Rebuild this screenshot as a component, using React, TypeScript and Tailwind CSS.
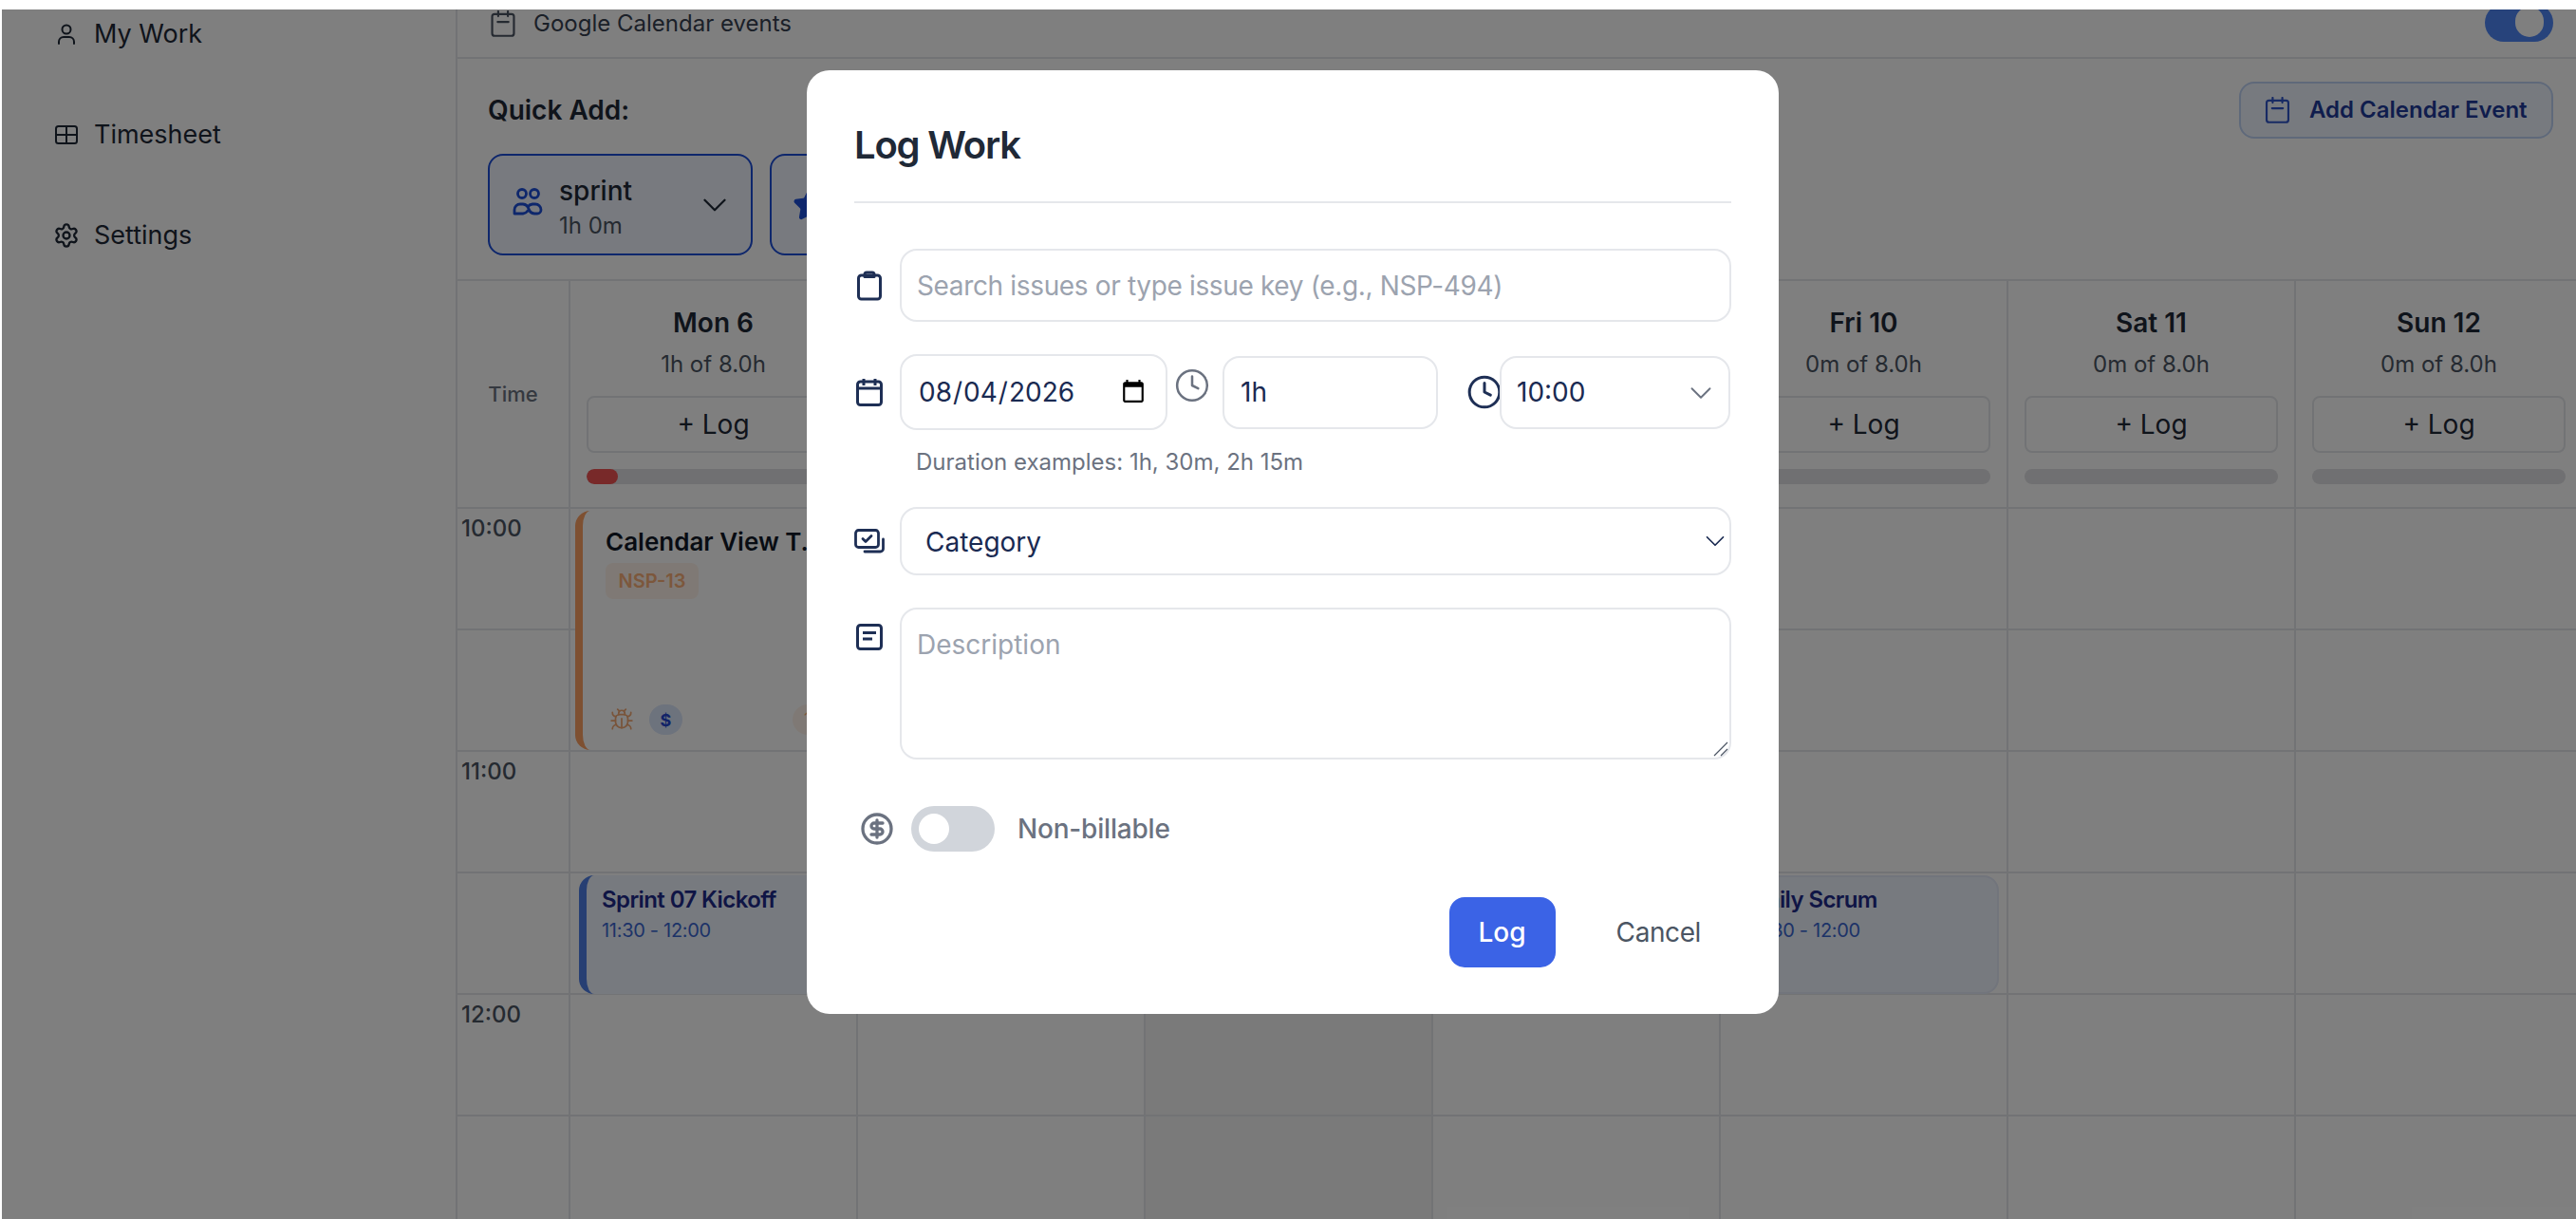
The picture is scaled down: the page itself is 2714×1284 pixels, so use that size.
import { Bug, ChevronDown, CircleDollarSign, Clock, Settings, Star } from 'lucide-react';

const days = [
  { name: 'Mon 6', logged: '1h of 8.0h', progress: true },
  { name: 'Tue 7', logged: '0m of 8.0h' },
  { name: 'Wed 8', logged: '0m of 8.0h', today: true },
  { name: 'Thu 9', logged: '0m of 8.0h' },
  { name: 'Fri 10', logged: '0m of 8.0h' },
  { name: 'Sat 11', logged: '0m of 8.0h' },
  { name: 'Sun 12', logged: '0m of 8.0h' },
];

const CalendarIcon = ({ className }: { className?: string }) => (
  <svg viewBox="2 1 20 22" fill="none" stroke="currentColor" strokeWidth="1.7" strokeLinecap="round" strokeLinejoin="round" className={className}>
    <rect x="3" y="4" width="18" height="18" rx="2" />
    <path d="M8 1.8v4M16 1.8v4M7.5 10.5h9" />
  </svg>
);

const PersonIcon = () => (
  <svg viewBox="0 0 24 24" fill="none" stroke="currentColor" strokeWidth="2" strokeLinecap="round" className="w-6 h-6 shrink-0">
    <circle cx="12" cy="7" r="4.5" />
    <path d="M4 22v-2a5 5 0 0 1 5-5h6a5 5 0 0 1 5 5v2" />
  </svg>
);

const TableIcon = () => (
  <svg viewBox="0 0 24 24" fill="none" stroke="currentColor" strokeWidth="2" strokeLinejoin="round" className="w-6 h-6 shrink-0">
    <rect x="1" y="3" width="22" height="18" rx="2.5" />
    <path d="M1 12h22M12 3v18" />
  </svg>
);

const TeamIcon = () => (
  <svg viewBox="0 0 32 32" fill="none" stroke="currentColor" strokeWidth="2.8" strokeLinecap="round" className="w-8 h-8 shrink-0 -mt-[8px]">
    <circle cx="10" cy="8" r="4.5" />
    <circle cx="23" cy="8" r="4.5" />
    <path d="M2 29v-4a6 6 0 0 1 6-6h3a7 7 0 0 1 6 5 7 7 0 0 0 6 5h3a4 4 0 0 0 4-4 6 6 0 0 0-6-6h-3a7 7 0 0 0-5 3M2 29h9a7 7 0 0 0 5-3" />
  </svg>
);

const ClipboardIcon = () => (
  <svg viewBox="0 0 28 32" fill="none" stroke="currentColor" strokeWidth="3" strokeLinejoin="round" className="w-[28px] h-[32px] shrink-0">
    <rect x="2.5" y="5" width="23" height="25" rx="3" />
    <path d="M9 6.5V4a2 2 0 0 1 2-2h6a2 2 0 0 1 2 2v2.5z" />
  </svg>
);

const CalendarBoldIcon = () => (
  <svg viewBox="0 0 28 30" fill="none" stroke="currentColor" strokeWidth="3" strokeLinejoin="round" className="w-[28px] h-[30px] shrink-0">
    <rect x="1.5" y="4" width="25" height="24.5" rx="3" />
    <path d="M8 1v7M20 1v7M1.5 11h25" />
  </svg>
);

const CategoryIcon = () => (
  <svg viewBox="0 0 32 26" fill="none" stroke="currentColor" strokeWidth="2.8" strokeLinecap="round" strokeLinejoin="round" className="w-[32px] h-[26px] shrink-0">
    <rect x="1.5" y="1.5" width="24" height="18" rx="3" />
    <path d="M9 10.5l3 3 6-6" />
    <path d="M30.5 11v10a3 3 0 0 1-3 3H11" />
  </svg>
);

const NoteIcon = () => (
  <svg viewBox="0 0 28 28" fill="none" stroke="currentColor" strokeWidth="3" strokeLinejoin="round" className="w-[28px] h-[28px] shrink-0">
    <rect x="1.5" y="1.5" width="25" height="25" rx="3" />
    <path d="M7 9.5h14M7 16h10" />
  </svg>
);

const DayColumn = ({ day, index }: { day: (typeof days)[number]; index: number }) => (
  <div className="relative w-[303px] shrink-0 border-r-2 border-[#e5e7eb]">
    <div className="h-[240px] border-b-2 border-[#e5e7eb] px-[17px] pt-[26px] flex flex-col">
      <div className="h-[36px] leading-[36px] text-center text-[28px] font-semibold text-[#1f2937]">{day.name}</div>
      <div className="mt-[8px] h-[36px] leading-[36px] text-center text-[24px] text-[#4b5563]">{day.logged}</div>
      <button className="mt-[15px] h-[60px] w-full border-2 border-[#e5e7eb] rounded-[8px] text-[28px] text-[#1f2937]">+ Log</button>
      <div className="mt-[17px] h-[16px] rounded-full bg-[#e0e0e4] overflow-hidden">
        {day.progress && <div className="h-full w-[33px] rounded-full bg-[#f05252]" />}
      </div>
    </div>
    {[0, 1, 2, 3, 4, 5].map((r) => (
      <div key={r} className={`h-[128px] border-b-2 border-[#e5e7eb] ${day.today ? 'bg-[#f4f4f4]' : ''}`} />
    ))}
    {index === 0 && (
      <>
        <div className="absolute left-[5px] top-[242px] w-[296px] h-[252px] rounded-[16px] border-l-[8px] border-[#fca063] bg-white pl-[24px] pt-[17px]">
          <div className="text-[26px] leading-[32px] font-semibold text-[#111827] whitespace-nowrap">Calendar View T...</div>
          <div className="mt-[6px] w-[98px] h-[38px] text-center rounded-[8px] bg-[#fff3ea] text-[20px] leading-[38px] font-semibold text-[#f8ae78]">NSP-13</div>
          <div className="absolute left-[28px] bottom-[16px] flex items-center gap-[16px]">
            <Bug className="w-[26px] h-[26px] text-[#f2a874]" strokeWidth={1.6} />
            <div className="w-[35px] h-[32px] rounded-full bg-[#dbe6fb] flex items-center justify-center text-[18px] font-bold text-[#2547d0]">$</div>
          </div>
          <div className="absolute right-[7px] bottom-[16px] w-[60px] h-[32px] rounded-full bg-[#fff3ea] text-[18px] leading-[32px] pl-[12px] text-[#f8ae78]">1h</div>
        </div>
        <div className="absolute left-[9px] top-[626px] w-[288px] h-[125px] rounded-[16px] border-l-[8px] border-[#4f7fe6] bg-[#eff4ff] pl-[16px] pt-[10px]">
          <div className="text-[24px] leading-[32px] font-semibold tracking-[-0.6px] text-[#1e2a8a] whitespace-nowrap">Sprint 07 Kickoff</div>
          <div className="text-[20px] leading-[28px] mt-[2px] tracking-[-0.3px] text-[#3b66d0] whitespace-nowrap">11:30 - 12:00</div>
        </div>
      </>
    )}
    {index === 4 && (
      <div className="absolute left-[9px] top-[626px] w-[284px] h-[125px] rounded-[16px] border-2 border-[#e4eaf8] bg-[#eff4ff] pl-[21px] pt-[8px]">
        <div className="text-[24px] leading-[32px] font-semibold tracking-[-0.6px] text-[#1e2a8a] whitespace-nowrap">Daily Scrum</div>
        <div className="text-[20px] leading-[28px] mt-[2px] tracking-[-0.3px] text-[#3b66d0] whitespace-nowrap">11:30 - 12:00</div>
      </div>
    )}
  </div>
);

const App = () => {
  return (
    <div className="w-[2714px] h-[1284px] bg-white pt-[10px] pl-[2px] overflow-hidden font-['Inter',sans-serif]">
      <div className="relative w-[2712px] h-[1274px] overflow-hidden flex bg-white">
        {/* sidebar */}
        <aside className="w-[480px] shrink-0 border-r-2 border-[#e5e7eb] pl-[56px] flex flex-col gap-[54px] text-[27px] text-[#1f2937]">
          <div className="h-[52px] flex items-center gap-[17px]"><PersonIcon /> My Work</div>
          <div className="h-[52px] flex items-center gap-[17px]"><TableIcon /> Timesheet</div>
          <div className="h-[52px] flex items-center gap-[15px] -ml-[2px]"><Settings className="w-7 h-7 shrink-0" /> Settings</div>
        </aside>

        <main className="flex-1 min-w-0 flex flex-col">
          <div className="h-[52px] shrink-0 border-b-2 border-[#e5e7eb] pl-[35px] pr-[24px] flex items-start justify-between overflow-hidden">
            <div className="h-[30px] flex items-center gap-[19px] text-[24px] text-[#374151]">
              <CalendarIcon className="w-[26px] h-[28px] text-[#4b5563]" />
              Google Calendar events
            </div>
            <div className="relative -mt-[6px] w-[72px] h-[40px] rounded-full bg-[#4f86f7] shrink-0">
              <div className="absolute right-[10px] top-[3px] w-[30px] h-[32px] rounded-full bg-white" />
            </div>
          </div>

          <div className="h-[234px] shrink-0 border-b-2 border-[#e5e7eb] pt-[24px] pl-[32px] pr-[24px]">
            <div className="h-[60px] flex items-center justify-between">
              <div className="text-[28px] font-semibold text-[#1f2937]">Quick Add:</div>
              <button className="h-[60px] w-[331px] rounded-[16px] border-2 border-[#bfd3f5] bg-[#eff5ff] pl-[25px] flex items-center gap-[20px] text-[24px] font-semibold text-[#1e3a9a]">
                <CalendarIcon className="w-[27px] h-[28px] text-[#2f55c8]" />
                Add Calendar Event
              </button>
            </div>
            <div className="mt-[16px] flex gap-[18px]">
              <div className="w-[279px] h-[107px] rounded-[16px] border-2 border-[#1d4ed8] bg-[#f1f5fe] pl-[24px] pr-[17px] flex items-center">
                <span className="text-[#1d4ed8]"><TeamIcon /></span>
                <div className="ml-[17px] flex-1 mt-[6px]">
                  <div className="text-[28px] leading-[36px] font-medium text-[#1f2937]">sprint</div>
                  <div className="mt-[3px] text-[24px] leading-[32px] text-[#4b5563]">1h 0m</div>
                </div>
                <ChevronDown className="w-[42px] h-[42px] text-[#1f2937]" strokeWidth={1.3} />
              </div>
              <div className="w-[278px] h-[107px] rounded-[16px] border-2 border-[#1d4ed8] bg-[#f1f5fe] pl-[22px] flex items-center">
                <Star className="w-[36px] h-[36px] text-[#1d4ed8] fill-[#1d4ed8]" />
              </div>
            </div>
          </div>

          <div className="flex flex-1">
            <div className="w-[119px] shrink-0 border-r-2 border-[#e5e7eb]">
              <div className="h-[240px] border-b-2 border-[#e5e7eb] flex items-center justify-center text-[22px] font-medium text-[#6b7280]">Time</div>
              {['10:00', '', '11:00', '', '12:00', ''].map((t, i) => (
                <div key={i} className="h-[128px] border-b-2 border-[#e5e7eb] pl-[4px] pt-[5px] text-[24px] leading-[32px] font-medium text-[#4b5563]">{t}</div>
              ))}
            </div>
            {days.map((d, i) => <DayColumn key={d.name} day={d} index={i} />)}
          </div>
        </main>

        {/* modal backdrop */}
        <div className="absolute inset-0 bg-black/50 flex items-start pl-[848px] pt-[64px]">
          <div className="w-[1024px] h-[994px] bg-white rounded-[24px] pt-[50px] px-[50px] flex flex-col">
            <div className="h-[58px] leading-[58px] text-[40px] font-semibold tracking-[-1.2px] text-[#1f2937]">Log Work</div>
            <div className="mt-[30px] h-[2px] bg-[#e5e7eb]" />

            <div className="mt-[48px] flex items-center gap-[16px] text-[#1e2f55]">
              <span className="w-[32px] flex justify-center"><ClipboardIcon /></span>
              <input
                placeholder="Search issues or type issue key (e.g., NSP-494)"
                className="flex-1 h-[77px] rounded-[18px] border-2 border-[#e5e7eb] px-[16px] text-[28px] tracking-[-0.35px] text-[#1a2a52] placeholder:text-[#9ca3af] outline-none"
              />
            </div>

            <div className="mt-[34px] flex items-center text-[#1e2f55]">
              <span className="w-[32px] flex justify-center"><CalendarBoldIcon /></span>
              <input
                type="date"
                defaultValue="2026-08-04"
                className="ml-[16px] w-[282px] h-[80px] rounded-[18px] border-2 border-[#e5e7eb] pl-[17px] pr-[18px] text-[28px] text-[#1a2a52] outline-none"
              />
              <Clock className="ml-[7px] -mt-[14px] w-[38px] h-[38px] shrink-0 text-[#6b7280]" strokeWidth={1.6} />
              <input
                defaultValue="1h"
                className="ml-[13px] w-[227px] h-[77px] rounded-[18px] border-2 border-[#e5e7eb] pl-[17px] text-[28px] text-[#1a2a52] outline-none"
              />
              <Clock className="ml-[30px] w-[38px] h-[38px] shrink-0 text-[#1e2f55] -mr-[3px]" strokeWidth={1.9} />
              <div className="relative w-[243px] h-[77px]">
                <select className="appearance-none w-full h-full rounded-[18px] border-2 border-[#e5e7eb] bg-white pl-[16px] text-[28px] text-[#1a2a52] outline-none">
                  <option>10:00</option>
                </select>
                <ChevronDown className="absolute right-[12px] top-[20px] w-[38px] h-[38px] text-[#6b7280] pointer-events-none" strokeWidth={1.2} />
              </div>
            </div>

            <div className="mt-[18px] ml-[65px] h-[32px] leading-[32px] text-[24px] text-[#6b7280]">Duration examples: 1h, 30m, 2h 15m</div>

            <div className="mt-[31px] flex items-center gap-[16px] text-[#1e2f55]">
              <span className="w-[32px] flex justify-center"><CategoryIcon /></span>
              <div className="relative flex-1 h-[72px]">
                <select className="appearance-none w-full h-full rounded-[18px] border-2 border-[#e5e7eb] bg-white pl-[25px] pt-[2px] text-[28px] text-[#1a2a52] outline-none">
                  <option>Category</option>
                </select>
                <ChevronDown className="absolute right-0 top-[19px] w-[34px] h-[34px] text-[#1a2a52] pointer-events-none" strokeWidth={1.2} />
              </div>
            </div>

            <div className="mt-[34px] flex items-start gap-[16px] text-[#1e2f55]">
              <span className="w-[32px] flex justify-center mt-[17px]"><NoteIcon /></span>
              <div className="relative flex-1 h-[160px]">
                <textarea
                  placeholder="Description"
                  className="block w-full h-full resize-none rounded-[18px] border-2 border-[#e5e7eb] px-[16px] pt-[19px] pb-[20px] text-[28px] leading-[36px] text-[#1a2a52] placeholder:text-[#9ca3af] outline-none"
                />
                <svg viewBox="0 0 16 16" fill="none" stroke="#4b5563" strokeWidth="1.2" className="absolute right-[3px] bottom-[3px] w-[16px] h-[16px] pointer-events-none">
                  <path d="M1 15L15 1M8 15l7-7" />
                </svg>
              </div>
            </div>

            <div className="mt-[49px] flex items-center">
              <CircleDollarSign className="ml-[6px] w-[36px] h-[36px] text-[#6b7280]" strokeWidth={2.2} />
              <div className="ml-[18px] w-[88px] h-[48px] rounded-full bg-[#d1d5db] relative">
                <div className="absolute left-[8px] top-[8px] w-[32px] h-[32px] rounded-full bg-white" />
              </div>
              <div className="ml-[24px] text-[28px] font-medium tracking-[-0.2px] text-[#6b7280]">Non-billable</div>
            </div>

            <div className="mt-[48px] flex justify-end items-center pr-[32px]">
              <button className="w-[112px] h-[74px] rounded-[16px] bg-[#3b63e6] text-[28px] font-medium text-white">Log</button>
              <button className="ml-[64px] text-[28px] tracking-[-0.4px] text-[#4b5563]">Cancel</button>
            </div>
          </div>
        </div>
      </div>
    </div>
  );
};

export default App;
